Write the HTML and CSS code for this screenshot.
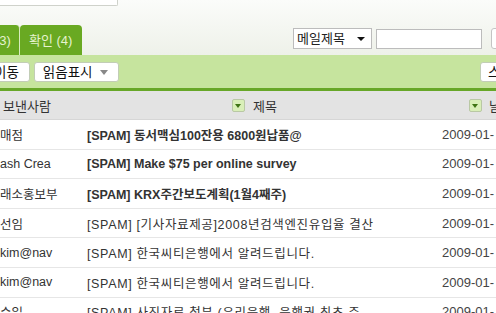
FILE: index.html
```html
<!DOCTYPE html>
<html lang="ko">
<head>
    <meta charset="UTF-8">
    <title>스팸메일함</title>
    <link rel="stylesheet" href="styles.css">
</head>
<body>
    <div class="page">
        <!-- Top: tabs and search -->
        <div class="top">
            <div class="topbox"></div>
            <div class="topbar">
                <div class="tabs">
                    <div class="tab tab-cut"><span>(3)</span></div>
                    <div class="tab">확인 (4)</div>
                </div>
                <div class="search">
                    <div class="select">메일제목 <span class="caret"></span></div>
                    <div class="field"></div>
                    <div class="search-btn"></div>
                </div>
            </div>
        </div>

        <!-- Toolbar -->
        <div class="toolbar">
            <div class="tools">
                <div class="btn btn-cut">이동</div>
                <div class="btn">읽음표시 <span class="arr"></span></div>
            </div>
            <div class="btn btn-right">스팸해제</div>
        </div>

        <!-- List header -->
        <div class="head">
            <div class="hcol hcol-from">보낸사람 <span class="sort"></span></div>
            <div class="hcol hcol-subj">제목 <span class="sort"></span></div>
            <div class="hcol hcol-date">날짜</div>
        </div>

        <!-- Mail rows -->
        <ul class="list">
            <li class="row unread">
                <span class="from">매점</span>
                <span class="subj">[SPAM] 동서맥심100잔용 6800원납품@</span>
                <span class="date">2009-01-</span>
            </li>
            <li class="row unread">
                <span class="from">ash Crea</span>
                <span class="subj">[SPAM] Make $75 per online survey</span>
                <span class="date">2009-01-</span>
            </li>
            <li class="row unread">
                <span class="from">래소홍보부</span>
                <span class="subj">[SPAM] KRX주간보도계획(1월4째주)</span>
                <span class="date">2009-01-</span>
            </li>
            <li class="row">
                <span class="from">선임</span>
                <span class="subj">[SPAM] [기사자료제공]2008년검색엔진유입율 결산</span>
                <span class="date">2009-01-</span>
            </li>
            <li class="row">
                <span class="from">kim@nav</span>
                <span class="subj">[SPAM] 한국씨티은행에서 알려드립니다.</span>
                <span class="date">2009-01-</span>
            </li>
            <li class="row">
                <span class="from">kim@nav</span>
                <span class="subj">[SPAM] 한국씨티은행에서 알려드립니다.</span>
                <span class="date">2009-01-</span>
            </li>
            <li class="row">
                <span class="from">수일</span>
                <span class="subj">[SPAM] 사진자료 첨부 (우리은행, 은행권 최초 주</span>
                <span class="date">2009-01-</span>
            </li>
        </ul>
    </div>
</body>
</html>
```

FILE: styles.css
```css
html, body {
    margin: 0;
    padding: 0;
    overflow: hidden;
    background: #fff;
}

.page {
    width: 540px;
    font-family: "Liberation Sans", "Noto Sans CJK KR", sans-serif;
    font-size: 12.5px;
    color: #333;
}

/* top area */
.top {
    height: 55px;
    background: linear-gradient(#fbfcfa, #eef1e9);
    display: flex;
    flex-direction: column;
}

.topbox {
    width: 117px;
    height: 5px;
    background: #fff;
    border-right: 1px solid #cfd2cb;
    border-bottom: 1px solid #cfd2cb;
    border-bottom-right-radius: 2px;
}

.topbar {
    flex: 1;
    display: flex;
    justify-content: space-between;
    align-items: flex-end;
}

.tabs {
    display: flex;
    align-items: flex-end;
}

.tab {
    height: 30px;
    line-height: 31px;
    padding: 0 10px 0 9px;
    background: #69a922;
    color: #e6f3cf;
    font-size: 13px;
    border-radius: 4px 4px 0 0;
}

.tab-cut {
    width: 19px;
    padding: 0;
    overflow: hidden;
    border-top-left-radius: 0;
    border-right: 1px solid #d8ecbf;
}

.tab-cut span {
    margin-left: -5px;
}

.search {
    display: flex;
    align-items: center;
    gap: 4px;
    margin-bottom: 6px;
    margin-right: 17px;
}

.select {
    width: 74px;
    height: 19px;
    line-height: 19px;
    padding-left: 3px;
    background: #fff;
    border: 1px solid #bcbcbc;
    font-size: 13px;
    color: #222;
    position: relative;
}

.caret {
    position: absolute;
    right: 6px;
    top: 8px;
    border-left: 4px solid transparent;
    border-right: 4px solid transparent;
    border-top: 4px solid #111;
}

.field {
    width: 104px;
    height: 18px;
    background: #fff;
    border: 1px solid #bcbcbc;
}

.search-btn {
    width: 30px;
    height: 19px;
    margin-left: 5px;
    background: #fff;
    border: 1px solid #c4c4c4;
    border-radius: 3px;
}

/* toolbar */
.toolbar {
    height: 36px;
    box-sizing: border-box;
    padding-top: 7px;
    background: #c6e49e;
    border-bottom: 3px solid #67a728;
    display: flex;
    justify-content: space-between;
    align-items: flex-start;
}

.tools {
    display: flex;
    gap: 4px;
}

.btn {
    height: 18px;
    line-height: 19px;
    padding: 0 10px 0 8px;
    background: #fff;
    border: 1px solid #c2cdb6;
    border-radius: 3px;
    font-size: 13.5px;
    color: #111;
    display: flex;
    align-items: center;
    gap: 5px;
    white-space: nowrap;
}

.btn-cut {
    margin-left: -15px;
}

.btn-right {
    width: 44px;
    padding: 0 7px;
    overflow: hidden;
}

.arr {
    border-left: 4px solid transparent;
    border-right: 4px solid transparent;
    border-top: 5px solid #888;
    margin-left: 2px;
}

/* list header */
.head {
    height: 28px;
    background: #e3e3e3;
    border-bottom: 1px solid #d6d6d6;
    display: flex;
    align-items: center;
    font-size: 13px;
    color: #333;
}

.hcol {
    display: flex;
    align-items: center;
    justify-content: space-between;
    box-sizing: border-box;
}

.hcol-from {
    width: 250px;
    padding: 0 5px 0 3px;
}

.hcol-subj {
    width: 237px;
    padding: 0 5px 0 3px;
}

.hcol-date {
    padding-left: 2px;
}

.sort {
    width: 11px;
    height: 11px;
    background: #d9efb8;
    border: 1px solid #b9c8a4;
    border-radius: 2px;
    position: relative;
}

.sort::after {
    content: "";
    position: absolute;
    left: 2px;
    top: 4px;
    border-left: 3.5px solid transparent;
    border-right: 3.5px solid transparent;
    border-top: 4px solid #3f7414;
}

/* mail rows */
.list {
    list-style: none;
    margin: 0;
    padding: 0;
}

.row {
    height: 28.6px;
    border-bottom: 1px solid #e6e6e6;
    display: flex;
    align-items: center;
    white-space: nowrap;
}

.from {
    width: 87px;
    overflow: hidden;
}

.subj {
    width: 355px;
    overflow: hidden;
    letter-spacing: 0.65px;
}

.unread .subj {
    font-weight: bold;
    letter-spacing: 0;
}

.date {
    color: #444;
    font-size: 13px;
}
```
